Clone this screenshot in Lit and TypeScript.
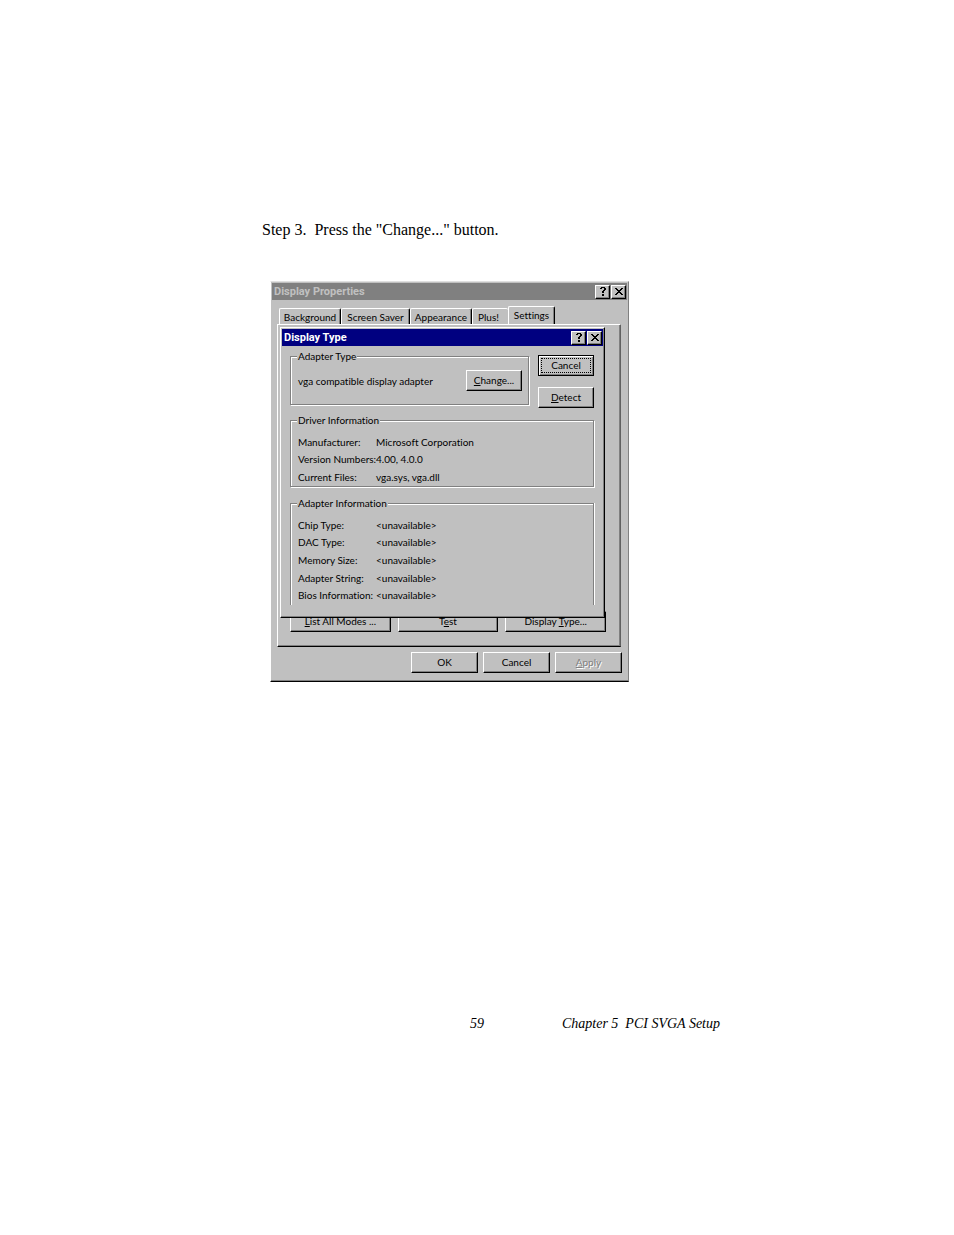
import { LitElement, html, css, svg } from "lit";
import { customElement } from "lit/decorators.js";

const tabs = ["Background", "Screen Saver", "Appearance", "Plus!", "Settings"];

const driverInfo = [
  ["Manufacturer:", "Microsoft Corporation"],
  ["Version Numbers:", "4.00, 4.0.0"],
  ["Current Files:", "vga.sys, vga.dll"],
];

const adapterInfo = [
  ["Chip Type:", "<unavailable>"],
  ["DAC Type:", "<unavailable>"],
  ["Memory Size:", "<unavailable>"],
  ["Adapter String:", "<unavailable>"],
  ["Bios Information:", "<unavailable>"],
];

const helpGlyph = svg`<path d="M3 0h4v1h-4z M2 1h2v1h-2z M6 1h2v2h-2z M5 3h2v1h-2z M4 4h2v2h-2z M4 7h2v2h-2z"/>`;
const closeGlyph = svg`<path d="M1 1h2v1h-2z M7 1h2v1h-2z M2 2h2v1h-2z M6 2h2v1h-2z M3 3h4v1h-4z M4 4h2v1h-2z M3 5h4v1h-4z M2 6h2v1h-2z M6 6h2v1h-2z M1 7h2v1h-2z M7 7h2v1h-2z"/>`;

const chrome = css`
  * {
    box-sizing: border-box;
  }
  button {
    font: inherit;
    color: #000;
    background: #c0c0c0;
    margin: 0;
    padding: 0 0 1px;
    height: 21px;
    border: 1px solid;
    border-color: #fff #000 #000 #fff;
    border-radius: 0;
    box-shadow: inset -1px -1px 0 #808080;
    white-space: nowrap;
  }
  button:disabled {
    color: #808080;
    text-shadow: 1px 1px 0 #fff;
  }
`;

@customElement("title-bar")
export class TitleBar extends LitElement {
  static properties = {
    label: {},
    active: { type: Boolean, reflect: true },
  };
  declare label: string;
  declare active: boolean;

  static styles = [
    chrome,
    css`
      :host {
        display: flex;
        align-items: center;
        height: 17px;
        padding: 0 1px 0 2px;
        background: #808080;
        color: #c0c0c0;
        font-family: Roboto, "Liberation Sans", sans-serif;
        font-weight: 700;
        font-size: 11px;
      }
      :host([active]) {
        background: #000080;
        color: #fff;
      }
      .label {
        flex: 1;
      }
      .tool {
        display: grid;
        place-items: center;
        width: 15px;
        height: 14px;
        margin-left: 1px;
      }
      svg {
        display: block;
        width: 10px;
        height: 9px;
      }
    `,
  ];

  render() {
    return html`
      <span class="label">${this.label}</span>
      <button class="tool" aria-label="Help">
        <svg viewBox="0 0 10 9" shape-rendering="crispEdges">${helpGlyph}</svg>
      </button>
      <button class="tool" aria-label="Close">
        <svg viewBox="0 0 10 9" shape-rendering="crispEdges">${closeGlyph}</svg>
      </button>
    `;
  }
}

@customElement("display-type-dialog")
export class DisplayTypeDialog extends LitElement {
  static styles = [
    chrome,
    css`
      :host {
        display: block;
        box-sizing: border-box;
        background: #c0c0c0;
        border: 1px solid;
        border-color: #fff #000 #000 #fff;
        box-shadow: inset -1px -1px 0 #808080;
        padding: 1px 1px 12px;
      }
      .body {
        padding: 4px 9px 0 8px;
      }
      .top {
        display: flex;
        gap: 9px;
      }
      fieldset {
        min-width: 0;
        margin: 0;
        padding: 0 6px;
        border: 1px solid #808080;
        box-shadow: 1px 1px 0 #fff, inset 1px 1px 0 #fff;
      }
      legend {
        padding: 0 1px;
        line-height: 12px;
        background: #c0c0c0;
      }
      .adapter {
        flex: 1;
        height: 55px;
      }
      .adapter-row {
        display: flex;
        align-items: center;
        justify-content: space-between;
        padding: 8px 0 0 1px;
      }
      .push {
        width: 56px;
      }
      .actions {
        display: flex;
        flex-direction: column;
        gap: 11px;
        padding-top: 5px;
      }
      .default {
        border-color: #000;
        box-shadow: inset 1px 1px 0 #fff, inset -1px -1px 0 #808080;
        outline: 1px dotted #000;
        outline-offset: -4px;
      }
      .driver {
        height: 73px;
        margin-top: 6px;
      }
      .info {
        height: 108px;
        margin-top: 10px;
        border-bottom: none;
        box-shadow: 1px 0 0 #fff, inset 1px 1px 0 #fff;
      }
      dl {
        display: grid;
        grid-template-columns: 78px 1fr;
        grid-auto-rows: 1fr;
        align-items: center;
        margin: 0;
        padding: 0 1px;
      }
      .driver dl {
        height: 53px;
        margin-top: 7px;
      }
      .info dl {
        height: 88px;
        margin-top: 7px;
      }
      dd {
        margin: 0;
      }
      dt,
      dd {
        white-space: nowrap;
      }
    `,
  ];

  rows(items: string[][]) {
    return html`<dl>
      ${items.map(([name, value]) => html`<dt>${name}</dt><dd>${value}</dd>`)}
    </dl>`;
  }

  render() {
    return html`
      <title-bar label="Display Type" active></title-bar>
      <div class="body">
        <div class="top">
          <fieldset class="adapter">
            <legend>Adapter Type</legend>
            <div class="adapter-row">
              <span>vga compatible display adapter</span>
              <button class="push"><u>C</u>hange...</button>
            </div>
          </fieldset>
          <div class="actions">
            <button class="push default">Cancel</button>
            <button class="push"><u>D</u>etect</button>
          </div>
        </div>
        <fieldset class="driver">
          <legend>Driver Information</legend>
          ${this.rows(driverInfo)}
        </fieldset>
        <fieldset class="info">
          <legend>Adapter Information</legend>
          ${this.rows(adapterInfo)}
        </fieldset>
      </div>
    `;
  }
}

@customElement("display-properties")
export class DisplayProperties extends LitElement {
  static styles = [
    chrome,
    css`
      :host {
        display: block;
        box-sizing: border-box;
        background: #c0c0c0;
        border: 1px solid;
        border-color: #e0e0e0 #808080 #000 #fff;
        box-shadow: inset 0 -1px 0 #808080;
        padding: 1px 1px 8px;
        font: 10px/12px Lato, "Liberation Sans", sans-serif;
        font-variant-ligatures: none;
        color: #000;
      }
      .tabs {
        display: flex;
        align-items: flex-end;
        padding: 6px 0 0 7px;
      }
      .tab {
        height: 16px;
        padding: 0;
        border-width: 1px 1px 0;
        border-color: #fff #000 #000 #fff;
        border-radius: 2px 2px 0 0;
        box-shadow: inset -1px 0 0 #808080;
        flex: 0 0 auto;
      }
      .short {
        width: 36px;
        padding: 0 5px;
        text-align: left;
        border-right: none;
        box-shadow: none;
      }
      .mid {
        width: 62px;
      }
      .long {
        width: 69px;
      }
      .current {
        position: relative;
        width: 47px;
        height: 19px;
        padding: 0 0 2px;
        margin-bottom: -1px;
      }
      .panel {
        position: relative;
        margin: 0 6px 0 5px;
        height: 323px;
        display: flex;
        flex-direction: column;
        justify-content: flex-end;
        border: 1px solid;
        border-color: #fff #606060 #000 #fff;
        box-shadow: inset -1px -1px 0 #808080;
        padding: 0 14px 14px 12px;
      }
      .modes {
        display: grid;
        grid-template-columns: repeat(3, 1fr);
        gap: 7px;
      }
      display-type-dialog {
        position: absolute;
        top: 2px;
        left: 2px;
        right: 15px;
      }
      .footer {
        display: flex;
        justify-content: flex-end;
        gap: 5px;
        padding: 5px 5px 0 0;
      }
      .footer button {
        width: 67px;
      }
    `,
  ];

  render() {
    const sizes = ["mid", "long", "mid", "short", "current"];
    return html`
      <title-bar label="Display Properties"></title-bar>
      <div class="tabs" role="tablist">
        ${tabs.map(
          (name, i) => html`<button
            class="tab ${sizes[i]}"
            role="tab"
            aria-selected=${name === "Settings" ? "true" : "false"}
          >${name}</button>`
        )}
      </div>
      <div class="panel" role="tabpanel">
        <div class="modes">
          <button><u>L</u>ist All Modes ...</button>
          <button>T<u>e</u>st</button>
          <button>Display <u>T</u>ype...</button>
        </div>
        <display-type-dialog role="dialog" aria-label="Display Type"></display-type-dialog>
      </div>
      <div class="footer">
        <button>OK</button>
        <button>Cancel</button>
        <button disabled><u>A</u>pply</button>
      </div>
    `;
  }
}

@customElement("app-root")
export class AppRoot extends LitElement {
  static styles = css`
    :host {
      display: block;
      box-sizing: border-box;
      min-height: 100vh;
      background: #fff;
      color: #000;
      font: 16px/20px "Liberation Serif", "Times New Roman", serif;
      padding: 220px 234px 200px 262px;
    }
    p {
      margin: 0;
      white-space: pre;
    }
    .figure {
      margin: 41px 0 0 8px;
      max-width: 359px;
    }
    .footer {
      display: flex;
      justify-content: flex-end;
      gap: 78px;
      margin-top: 332px;
      font-size: 14px;
      font-style: italic;
      white-space: pre;
    }
  `;

  render() {
    return html`
      <main>
        <p>Step 3.  Press the "Change..." button.</p>
        <div class="figure"><display-properties></display-properties></div>
      </main>
      <footer class="footer"><span>59</span><span>Chapter 5  PCI SVGA Setup</span></footer>
    `;
  }
}
